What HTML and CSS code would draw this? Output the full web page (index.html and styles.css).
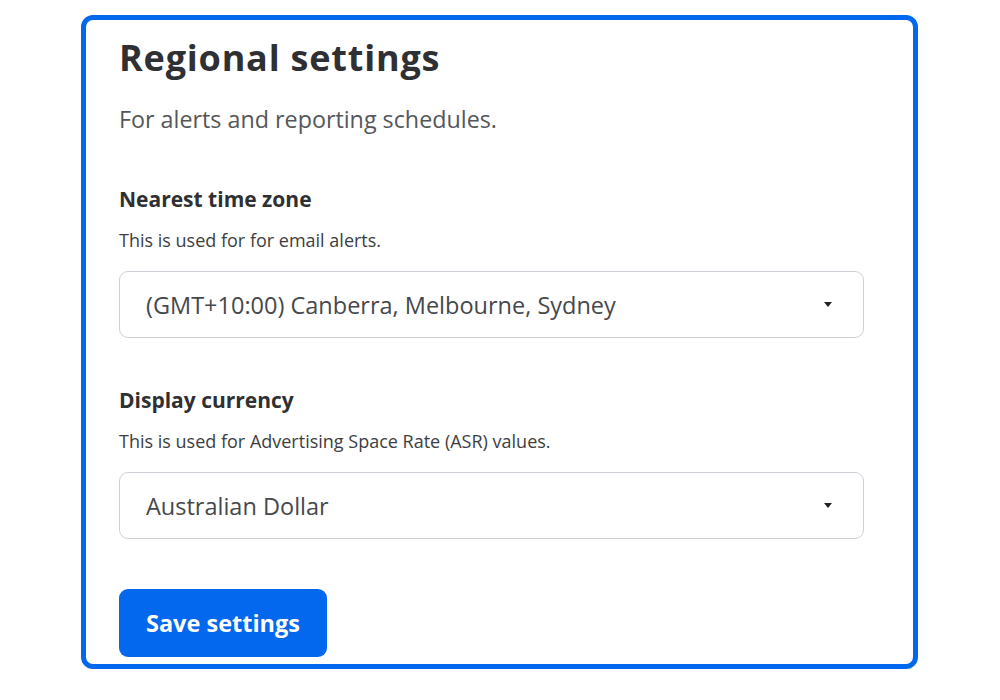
FILE: index.html
```html
<!DOCTYPE html>
<html lang="en">
<head>
<meta charset="utf-8">
<title>Regional settings</title>
<link rel="stylesheet" href="styles.css">
</head>
<body>
<div class="page">
  <form class="card">
    <h1 class="title">Regional settings</h1>
    <p class="subtitle">For alerts and reporting schedules.</p>

    <div class="field">
      <div class="label">Nearest time zone</div>
      <div class="hint">This is used for for email alerts.</div>
      <div class="select">
        <span class="select-value">(GMT+10:00) Canberra, Melbourne, Sydney</span>
        <span class="caret"></span>
      </div>
    </div>

    <div class="field">
      <div class="label">Display currency</div>
      <div class="hint">This is used for Advertising Space Rate (ASR) values.</div>
      <div class="select">
        <span class="select-value">Australian Dollar</span>
        <span class="caret"></span>
      </div>
    </div>

    <div class="actions">
      <button type="button" class="btn">Save settings</button>
    </div>
  </form>
</div>
</body>
</html>
```

FILE: styles.css
```css
* { box-sizing: border-box; }
html, body { margin: 0; padding: 0; background: #ffffff; }
body { font-family: "Open Sans", "Noto Sans", sans-serif; color: #2f3033; }

.page {
  padding: 15px 0 0 81px;
}

.card {
  width: 837px;
  height: 654px;
  border: 5px solid #0368ee;
  border-radius: 12px;
  padding: 16px 33px 0 33px;
  background: #fff;
}

.title {
  margin: 0;
  font-size: 36px;
  line-height: 44px;
  font-weight: 700;
  color: #2f3033;
  letter-spacing: 0.8px;
}

.subtitle {
  margin: 24px 0 0;
  font-size: 23.3px;
  line-height: 30px;
  color: #55575b;
}

.field { margin-top: 52px; }
.field + .field { margin-top: 49px; }

.label {
  font-size: 21px;
  line-height: 26px;
  font-weight: 700;
  color: #2f3033;
}

.hint {
  margin-top: 16px;
  font-size: 18px;
  line-height: 24px;
  color: #3c3e42;
}

.select {
  margin-top: 19px;
  width: 745px;
  height: 67px;
  border: 1px solid #ccd1d8;
  border-radius: 9px;
  display: flex;
  align-items: center;
  padding: 0 31px 0 26px;
}

.select-value {
  flex: 1;
  font-size: 23.5px;
  color: #46484c;
}

.caret {
  width: 0;
  height: 0;
  border-left: 4.5px solid transparent;
  border-right: 4.5px solid transparent;
  border-top: 5px solid #222;
}

.actions { margin-top: 50px; }

.btn {
  width: 208px;
  height: 68px;
  border: 0;
  border-radius: 9px;
  background: #0368ee;
  color: #fff;
  font-family: "Open Sans", "Noto Sans", sans-serif;
  font-size: 23.5px;
  font-weight: 700;
  padding: 0;
}
```
